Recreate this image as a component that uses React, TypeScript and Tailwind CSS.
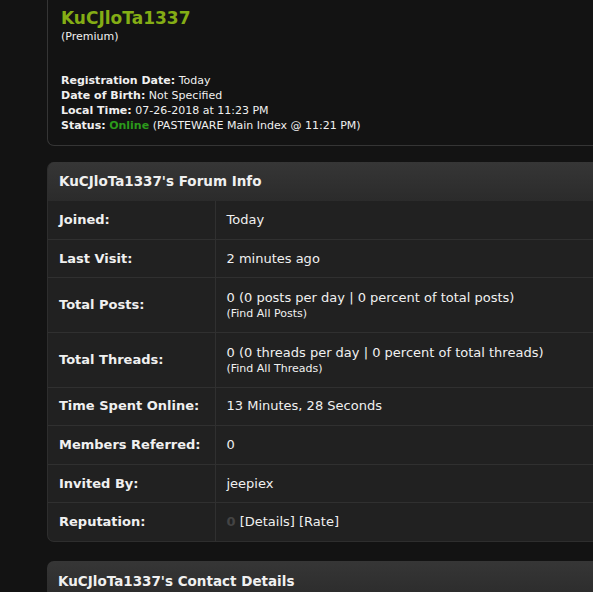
const font = { fontFamily: '"DejaVu Sans", Verdana, sans-serif' };

type Row = { label: string; value: React.ReactNode; sub?: string };

const rows: Row[] = [
  { label: "Joined:", value: "Today" },
  { label: "Last Visit:", value: "2 minutes ago" },
  { label: "Total Posts:", value: "0 (0 posts per day | 0 percent of total posts)", sub: "(Find All Posts)" },
  { label: "Total Threads:", value: "0 (0 threads per day | 0 percent of total threads)", sub: "(Find All Threads)" },
  { label: "Time Spent Online:", value: "13 Minutes, 28 Seconds" },
  { label: "Members Referred:", value: "0" },
  { label: "Invited By:", value: "jeepiex" },
  {
    label: "Reputation:",
    value: (
      <>
        <span className="font-bold text-[#444444]">0</span> [Details] [Rate]
      </>
    ),
  },
];

function InfoLine({ label, children }: { label: string; children: React.ReactNode }) {
  return (
    <div>
      <span className="font-bold">{label}</span> {children}
    </div>
  );
}

export default function App() {
  return (
    <div className="h-[592px] overflow-hidden bg-[#131313] text-[#f0f0f0]" style={font}>
      <div className="pl-[47px]">
        <div className="w-[640px] border-l border-b border-[#353535] rounded-bl-[7px] pl-[13px] pt-[8px] pb-[11px]">
          <div className="text-[17px] leading-[21px] font-bold text-[#84ad15]">KuCJloTa1337</div>
          <div className="text-[11px] leading-[15px]">(Premium)</div>
          <div className="text-[11px] leading-[15.3px] mt-[28.5px]">
            <InfoLine label="Registration Date:">Today</InfoLine>
            <InfoLine label="Date of Birth:">Not Specified</InfoLine>
            <InfoLine label="Local Time:">07-26-2018 at 11:23 PM</InfoLine>
            <InfoLine label="Status:">
              <span className="font-bold text-[#2b9a1b]">Online</span> (PASTEWARE Main Index @ 11:21 PM)
            </InfoLine>
          </div>
        </div>

        <div className="mt-[16px] w-[640px] rounded-[7px] overflow-hidden border-l border-b border-[#2e2e2e] bg-[#212121]">
          <div className="h-[39px] flex items-center pl-[11px] bg-gradient-to-b from-[#363636] to-[#2b2b2b] text-[13.5px] font-bold">
            KuCJloTa1337's Forum Info
          </div>
          <table className="w-full border-collapse text-[13px]">
            <tbody>
              {rows.map((r, i) => (
                <tr
                  key={r.label}
                  className={`${r.sub ? "h-[54.6px]" : "h-[38.6px]"} ${i < rows.length - 1 ? "border-b border-[#303030]" : ""}`}
                >
                  <td className="w-[167px] pl-[11px] font-bold border-r border-[#303030] align-middle leading-[16px]">
                    {r.label}
                  </td>
                  <td className="pl-[11px] align-middle leading-[16px]">
                    <div>{r.value}</div>
                    {r.sub && <div className="text-[11px] leading-[13px] mt-[1px]">{r.sub}</div>}
                  </td>
                </tr>
              ))}
            </tbody>
          </table>
        </div>

        <div className="mt-[19px] w-[640px] rounded-t-[7px] overflow-hidden bg-[#212121]">
          <div className="h-[39px] flex items-center pl-[11px] bg-gradient-to-b from-[#363636] to-[#2b2b2b] text-[13.5px] font-bold">
            KuCJloTa1337's Contact Details
          </div>
        </div>
      </div>
    </div>
  );
}
